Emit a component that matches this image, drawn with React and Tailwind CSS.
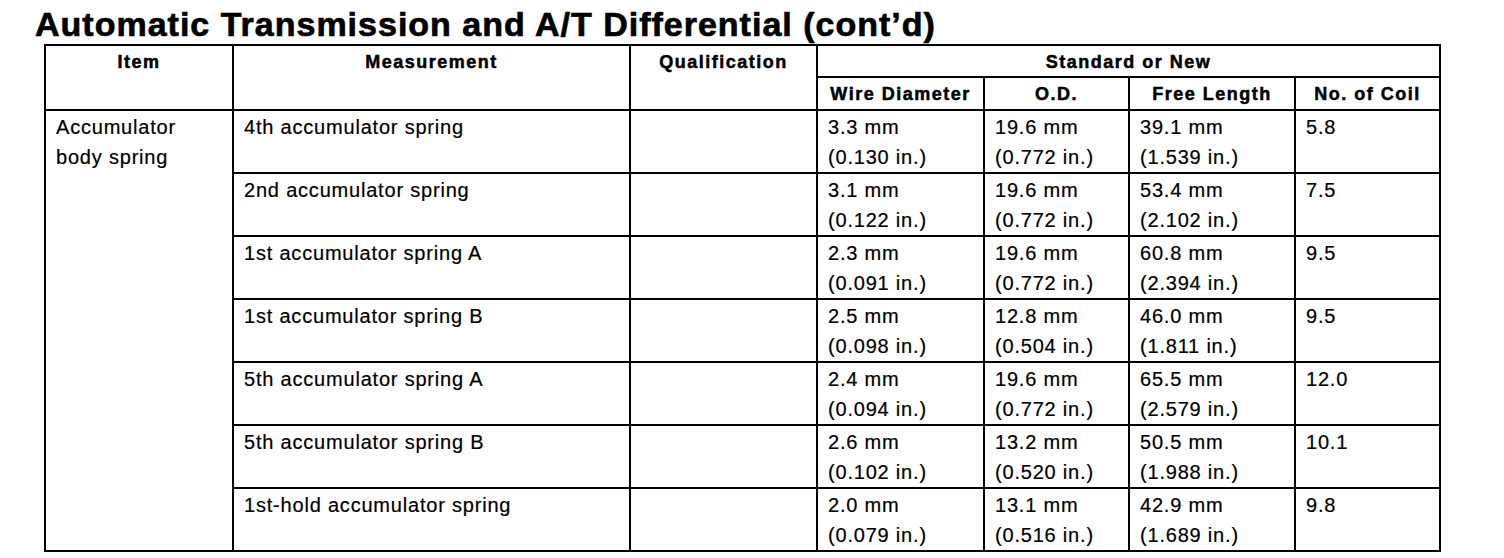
import React from "react";

const rows = [
  { name: "4th accumulator spring", wire: ["3.3 mm", "(0.130 in.)"], od: ["19.6 mm", "(0.772 in.)"], len: ["39.1 mm", "(1.539 in.)"], coil: "5.8" },
  { name: "2nd accumulator spring", wire: ["3.1 mm", "(0.122 in.)"], od: ["19.6 mm", "(0.772 in.)"], len: ["53.4 mm", "(2.102 in.)"], coil: "7.5" },
  { name: "1st accumulator spring A", wire: ["2.3 mm", "(0.091 in.)"], od: ["19.6 mm", "(0.772 in.)"], len: ["60.8 mm", "(2.394 in.)"], coil: "9.5" },
  { name: "1st accumulator spring B", wire: ["2.5 mm", "(0.098 in.)"], od: ["12.8 mm", "(0.504 in.)"], len: ["46.0 mm", "(1.811 in.)"], coil: "9.5" },
  { name: "5th accumulator spring A", wire: ["2.4 mm", "(0.094 in.)"], od: ["19.6 mm", "(0.772 in.)"], len: ["65.5 mm", "(2.579 in.)"], coil: "12.0" },
  { name: "5th accumulator spring B", wire: ["2.6 mm", "(0.102 in.)"], od: ["13.2 mm", "(0.520 in.)"], len: ["50.5 mm", "(1.988 in.)"], coil: "10.1" },
  { name: "1st-hold accumulator spring", wire: ["2.0 mm", "(0.079 in.)"], od: ["13.1 mm", "(0.516 in.)"], len: ["42.9 mm", "(1.689 in.)"], coil: "9.8" },
];

const cell = "border-2 border-black align-top pl-[10px] pt-[1px]";
const head = "border-2 border-black font-bold text-center align-top pt-[5px]";

function Two({ v }) {
  return (
    <>
      <div>{v[0]}</div>
      <div>{v[1]}</div>
    </>
  );
}

export default function App() {
  return (
    <div className="w-[1504px] h-[558px] bg-white text-black overflow-hidden" style={{ fontFamily: '"Liberation Sans", Arial, sans-serif' }}>
      <h1 className="pl-[35px] pt-[7px] h-[44px] text-[34px] font-bold leading-[34px] tracking-[1px] whitespace-nowrap [-webkit-text-stroke:0.7px_black]">
        Automatic Transmission and A/T Differential (cont’d)
      </h1>
      <table className="ml-[44px] w-[1395px] table-fixed border-collapse text-[20px] leading-[30px] tracking-[0.8px] [-webkit-text-stroke:0.2px_black]">
        <colgroup>
          <col className="w-[188px]" />
          <col className="w-[397px]" />
          <col className="w-[187px]" />
          <col className="w-[167px]" />
          <col className="w-[145px]" />
          <col className="w-[166px]" />
          <col className="w-[145px]" />
        </colgroup>
        <thead className="text-[18px] leading-[22px] tracking-[1.5px] [-webkit-text-stroke:0.5px_black]">
          <tr className="h-[32px]">
            <th rowSpan={2} className={head}>Item</th>
            <th rowSpan={2} className={head}>Measurement</th>
            <th rowSpan={2} className={head}>Qualification</th>
            <th colSpan={4} className={head}>Standard or New</th>
          </tr>
          <tr className="h-[33px]">
            <th className={head}>Wire Diameter</th>
            <th className={head}>O.D.</th>
            <th className={head}>Free Length</th>
            <th className={head}>No. of Coil</th>
          </tr>
        </thead>
        <tbody>
          {rows.map((r, i) => (
            <tr key={i} className="h-[63px]">
              {i === 0 && (
                <td rowSpan={rows.length} className={cell}>
                  Accumulator<br />body spring
                </td>
              )}
              <td className={cell}>{r.name}</td>
              <td className={cell}></td>
              <td className={cell}><Two v={r.wire} /></td>
              <td className={cell}><Two v={r.od} /></td>
              <td className={cell}><Two v={r.len} /></td>
              <td className={cell}>{r.coil}</td>
            </tr>
          ))}
        </tbody>
      </table>
    </div>
  );
}
